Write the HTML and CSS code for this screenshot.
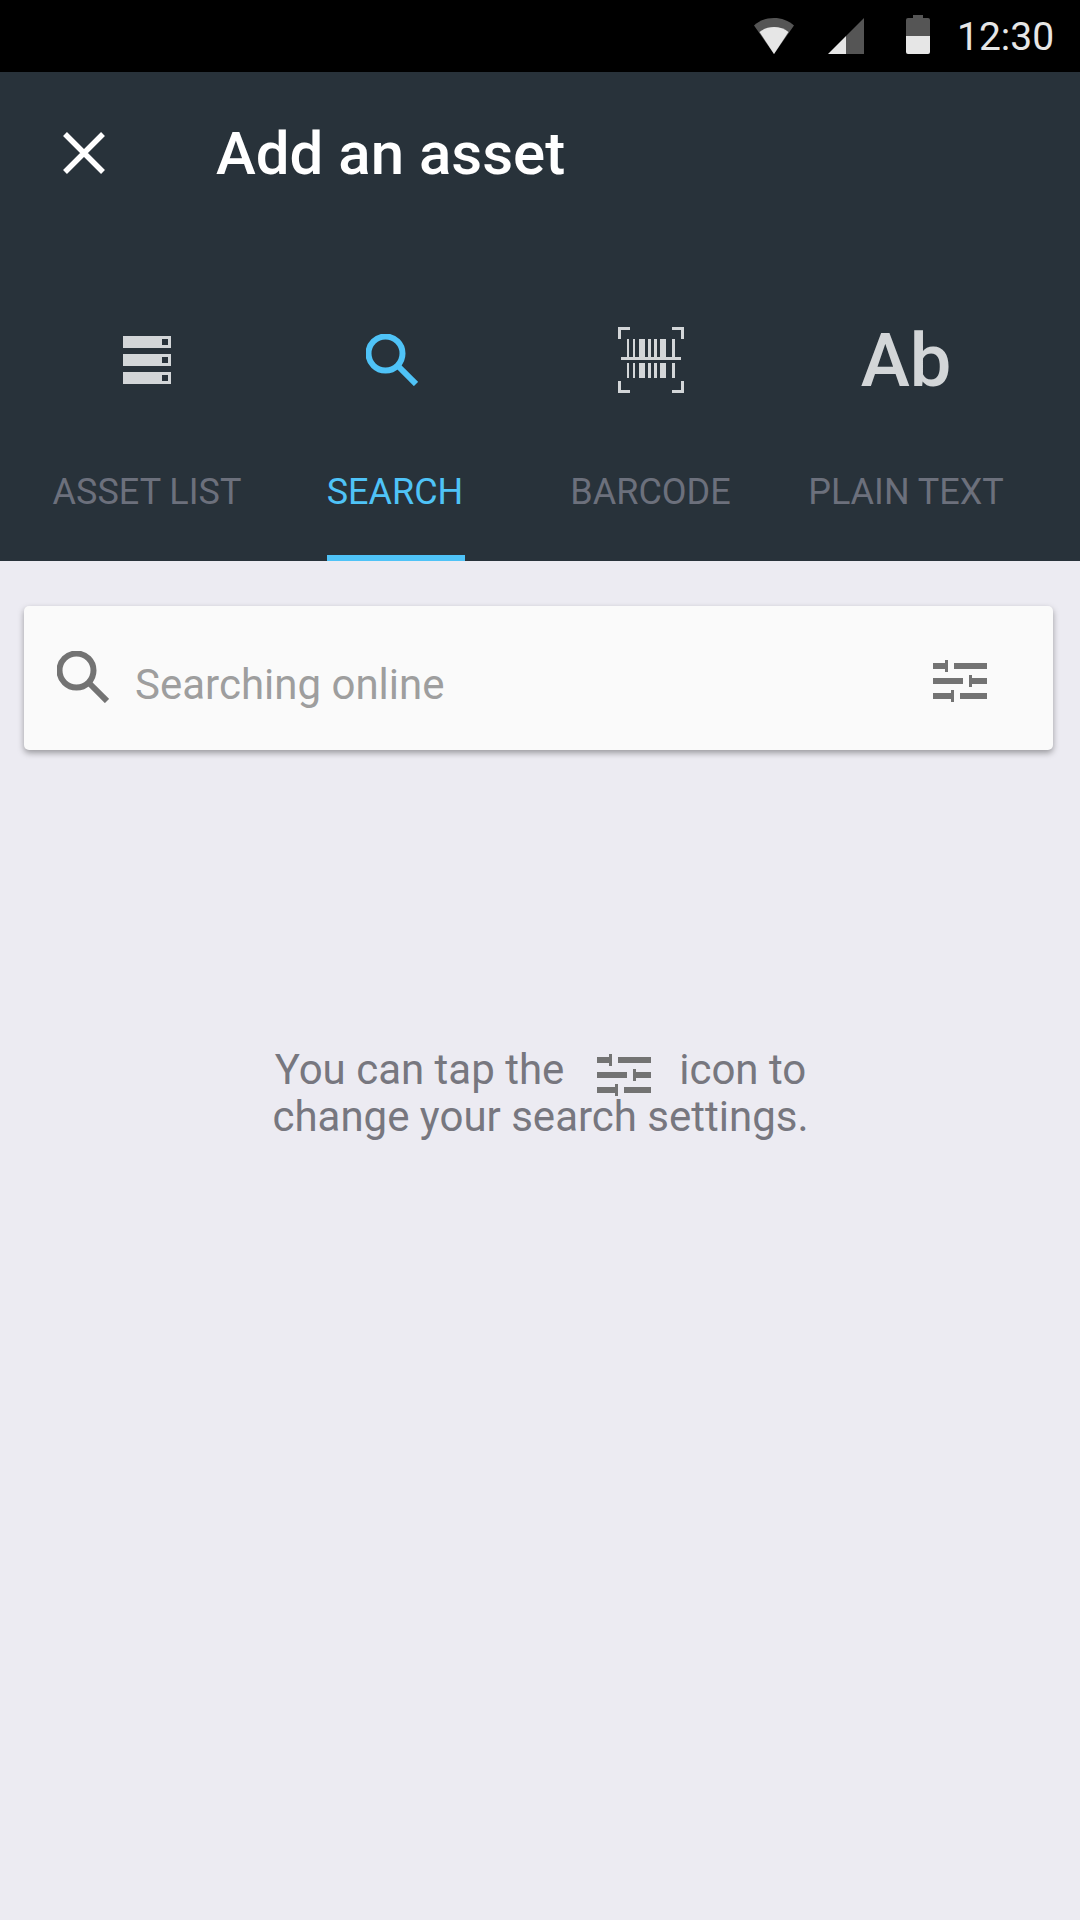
FILE: index.html
```html
<!DOCTYPE html>
<html lang="en">
<head>
  <meta charset="UTF-8" />
  <title>Add an asset</title>
  <link rel="stylesheet" href="styles.css">
</head>
<body>

<svg class="defs" width="0" height="0">
  <symbol id="tune" viewBox="0 0 54 42">
    <path d="M0 3h12V0h3v12h-3V9H0zM21 3h33v6H21zM0 18h30v6H0zM36 15h3v3h15v6H39v3h-3zM0 33h18v-3h3v12h-3v-3H0zM27 33h27v6H27z"/>
  </symbol>
</svg>

<div class="status-bar">
  <svg class="st-wifi" width="40" height="36" viewBox="0 0 40 36">
    <path fill="#555" d="M0 7.500C5.500 2.500 12.500 0 20 0s14.500 2.500 20 7.500L20 36z"/>
    <path fill="#e6e6e6" d="M5.500 14C9.500 10.800 14.500 9 20 9s10.500 1.800 14.500 5L20 36z"/>
  </svg>
  <svg class="st-signal" width="36" height="36" viewBox="0 0 36 36">
    <path fill="#555" d="M36 0v36H18V18z"/>
    <path fill="#e6e6e6" d="M18 18v18H0z"/>
  </svg>
  <svg class="st-battery" width="24" height="39" viewBox="0 0 24 39">
    <path fill="#555" d="M7 0h10v3h5a2 2 0 0 1 2 2v16H0V5a2 2 0 0 1 2-2h5z"/>
    <path fill="#e6e6e6" d="M0 21h24v16a2 2 0 0 1-2 2H2a2 2 0 0 1-2-2z"/>
  </svg>
  <span class="st-time">12:30</span>
</div>

<header class="appbar">
  <div class="appbar-top">
    <svg class="close-icon" width="42" height="42" viewBox="0 0 42 42">
      <path d="M2 2l38 38M40 2L2 40"/>
    </svg>
    <h1>Add an asset</h1>
  </div>

  <nav class="tabs">
    <div class="tab tab-list">
      <div class="tab-icon">
        <svg width="48" height="48" viewBox="0 0 48 48">
          <path fill="#d3d6d8" fill-rule="evenodd" d="M0 0h48v12H0zM39 3v6h6V3zM0 18h48v12H0zM39 21v6h6v-6zM0 36h48v12H0zM39 39v6h6v-6z"/>
        </svg>
      </div>
      <span class="tab-label">ASSET LIST</span>
    </div>
    <div class="tab tab-search active">
      <div class="tab-icon">
        <svg class="search-icon" width="52" height="52" viewBox="0 0 52 52">
          <circle cx="19.500" cy="19.500" r="17" />
          <path d="M32 32l18 18"/>
        </svg>
      </div>
      <span class="tab-label">SEARCH</span>
    </div>
    <div class="tab tab-barcode">
      <div class="tab-icon">
        <svg width="66" height="66" viewBox="0 0 66 66">
          <path fill="none" stroke="#d3d6d8" stroke-width="3" d="M12 1.500H1.500V12M54 1.500h10.500V12M12 64.500H1.500V54M54 64.500h10.500V54"/>
          <path fill="#d3d6d8" d="M3 30h60v3H3zM9 12h2v18H9zM15 12h2v18h-2zM21 12h6v18h-6zM30 12h3v18h-3zM36 12h3v18h-3zM42 12h6v18h-6zM54 12h3v18h-3zM9 36h2v15H9zM15 36h2v15h-2zM21 36h6v15h-6zM30 36h3v15h-3zM36 36h3v15h-3zM42 36h6v15h-6zM54 36h3v15h-3z"/>
        </svg>
      </div>
      <span class="tab-label">BARCODE</span>
    </div>
    <div class="tab tab-text">
      <div class="tab-icon ab">Ab</div>
      <span class="tab-label">PLAIN TEXT</span>
    </div>
  </nav>
</header>

<main class="content">
  <div class="search-card">
    <svg class="search-icon grey" width="52" height="52" viewBox="0 0 52 52">
      <circle cx="19.500" cy="19.500" r="17" />
      <path d="M32 32l18 18"/>
    </svg>
    <span class="search-text">Searching online</span>
    <svg class="tune" width="54" height="42"><use href="#tune"/></svg>
  </div>

  <p class="hint">
    You can tap the
    <svg class="tune inline" width="54" height="42"><use href="#tune"/></svg>
    icon to<br>
    change your search settings.
  </p>
</main>

</body>
</html>
```

FILE: styles.css
```css
* {
  box-sizing: border-box;
}
body {
  margin: 0;
  min-height: 1920px;
  font-family: Roboto, sans-serif;
  background: #ecebf2;
}
.defs {
  position: absolute;
}
.status-bar {
  height: 72px;
  background: #000;
  display: flex;
  align-items: flex-start;
  padding: 18px 0 0 754px;
}
.st-signal {
  margin-left: 34px;
}
.st-battery {
  margin-left: 42px;
  margin-top: -3px;
}
.st-time {
  margin-left: 27px;
  margin-top: -3px;
  font-size: 39px;
  line-height: 45px;
  color: #e6e6e6;
}
.appbar {
  height: 489px;
  background: #28323a;
}
.appbar-top {
  height: 162px;
  display: flex;
  align-items: center;
  padding-left: 63px;
}
.close-icon path {
  fill: none;
  stroke: #fff;
  stroke-width: 5.500;
}
.appbar-top h1 {
  margin: 0 0 0 111px;
  font-size: 60px;
  font-weight: 500;
  color: #fff;
}
.tabs {
  display: grid;
  grid-template-columns: 254px 242px 269px 242px;
  padding-left: 20px;
}
.tab {
  height: 327px;
  display: flex;
  flex-direction: column;
  align-items: center;
  position: relative;
}
.tab-icon {
  height: 120px;
  display: flex;
  align-items: center;
  justify-content: center;
  margin-top: 66px;
}
.tab-label {
  margin-top: 50px;
  font-size: 36px;
  line-height: 44px;
  color: #6c707c;
  white-space: nowrap;
}
.tab.active .tab-label {
  color: #4fc3f7;
}
.tab.active::after {
  content: "";
  position: absolute;
  left: 53px;
  bottom: 0;
  width: 138px;
  height: 6px;
  background: #4fc3f7;
}
.tab-search .tab-icon {
  margin-left: -6px;
}
.ab {
  font-size: 74px;
  font-weight: 500;
  color: #d3d6d8;
}
.search-icon circle,
.search-icon path {
  fill: none;
  stroke: #4fc3f7;
  stroke-width: 6;
}
.search-icon.grey circle,
.search-icon.grey path {
  stroke: #737373;
}
.content {
  padding: 45px 27px 0 24px;
}
.search-card {
  height: 144px;
  background: #fafafa;
  border-radius: 5px;
  box-shadow: 0 3px 6px rgba(0, 0, 0, 0.35);
  display: flex;
  align-items: center;
  padding: 0 66px 0 33px;
}
.search-card .search-icon {
  margin-top: -2px;
}
.search-text {
  margin-left: 26px;
  margin-top: 12px;
  font-size: 42px;
  color: #9e9e9e;
}
.tune {
  fill: #737373;
}
.search-card .tune {
  margin-left: auto;
  margin-top: 6px;
}
.hint {
  margin: 296px -4px 0 0;
  text-align: center;
  font-size: 42px;
  line-height: 47px;
  color: #77777f;
}
.tune.inline {
  margin: -12px 18px -12px 22px;
  vertical-align: 0;
}
```
